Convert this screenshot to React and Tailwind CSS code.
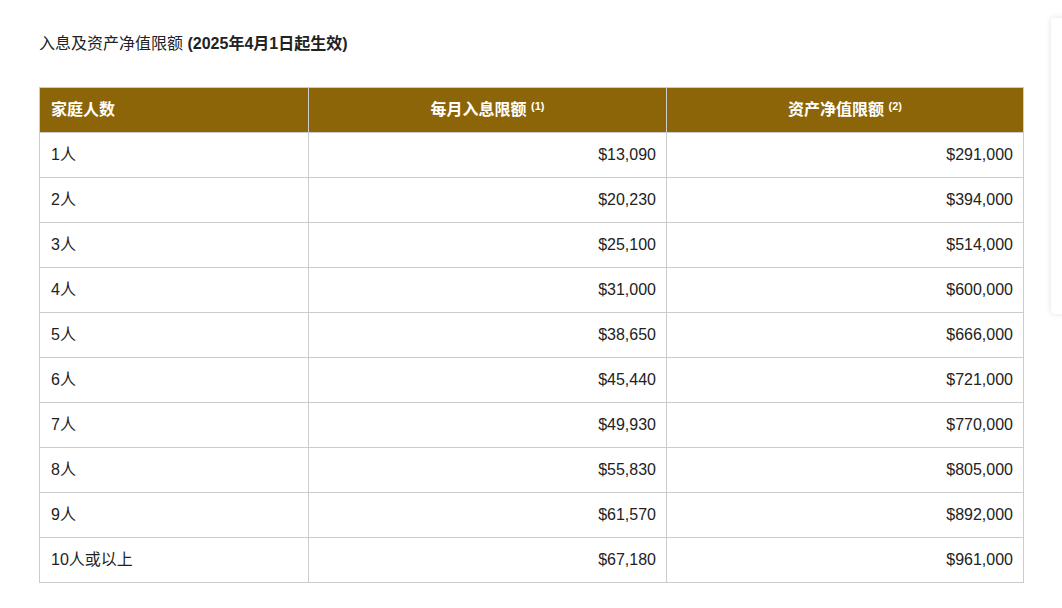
const rows=[["1人","$13,090","$291,000"],["2人","$20,230","$394,000"],["3人","$25,100","$514,000"],["4人","$31,000","$600,000"],["5人","$38,650","$666,000"],["6人","$45,440","$721,000"],["7人","$49,930","$770,000"],["8人","$55,830","$805,000"],["9人","$61,570","$892,000"],["10人或以上","$67,180","$961,000"]];
export default function App(){return(
<div className="relative w-[1062px] h-[608px] bg-white overflow-hidden text-[#222] text-[16px]" style={{fontFamily:'Arial,"Liberation Sans","Noto Sans CJK SC",sans-serif'}}>
<div className="absolute left-[1051px] top-[18px] w-[20px] h-[296px] bg-white shadow-[0_0_6px_rgba(0,0,0,0.12)] rounded"></div>
<div className="pl-[39px] pt-[33px]">
<div className="h-[22px] leading-[22px]">入息及资产净值限额 <b>(2025年4月1日起生效)</b></div>
<table className="mt-[32px] w-[985px] border-collapse">
<thead><tr className="bg-[#8b6508] text-white font-bold h-[45px]">
<th className="w-[269px] border border-[#ccc] text-left px-[11px] font-bold">家庭人数</th>
<th className="w-[358px] border border-[#ccc] text-center font-bold">每月入息限额 <sup className="text-[11px]">(1)</sup></th>
<th className="border border-[#ccc] text-center font-bold">资产净值限额 <sup className="text-[11px]">(2)</sup></th>
</tr></thead>
<tbody>{rows.map(r=>(<tr key={r[0]} className="h-[45px]">
<td className="border border-[#ccc] px-[11px]">{r[0]}</td>
<td className="border border-[#ccc] px-[10px] text-right">{r[1]}</td>
<td className="border border-[#ccc] px-[10px] text-right">{r[2]}</td></tr>))}</tbody>
</table></div></div>)}
